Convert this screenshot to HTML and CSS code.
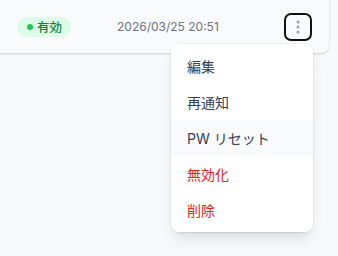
FILE: index.html
```html
<!DOCTYPE html>
<html lang="ja">
<head>
<meta charset="utf-8">
<link rel="stylesheet" href="styles.css">
</head>
<body>
<div class="page">
  <div class="card">
    <div class="row">
      <div class="cell-status">
        <span class="badge"><span class="dot"></span>有効</span>
      </div>
      <div class="cell-date">2026/03/25 20:51</div>
      <div class="cell-actions">
        <button class="kebab" aria-label="メニュー">
          <svg width="4" height="14" viewBox="0 0 4 14"><circle cx="2" cy="2" r="1.5"/><circle cx="2" cy="7" r="1.5"/><circle cx="2" cy="12" r="1.5"/></svg>
        </button>
        <div class="menu">
          <div class="item">編集</div>
          <div class="item">再通知</div>
          <div class="item hover">PW リセット</div>
          <div class="item danger">無効化</div>
          <div class="item danger">削除</div>
        </div>
      </div>
    </div>
  </div>
</div>
</body>
</html>
```
FILE: styles.css
```css
* { box-sizing: border-box; }
html, body { margin: 0; padding: 0; }
body {
  background: #f8f9fb;
  font-family: Inter, "Noto Sans CJK JP", sans-serif;
  width: 338px;
  height: 256px;
  overflow: hidden;
}
.page { padding-right: 9px; }
.card {
  margin-top: -20px;
  margin-left: -10px;
  background: #f9fafb;
  border-radius: 0 0 8px 8px;
  box-shadow: 0 1px 3px rgba(0,0,0,0.12), 0 1px 2px rgba(0,0,0,0.06);
}
.row {
  display: flex;
  align-items: center;
  height: 73px;
  padding-top: 20px;
}
.cell-status { width: 127px; padding-left: 27px; display: flex; }
.badge {
  display: inline-flex;
  align-items: center;
  gap: 4px;
  height: 20px;
  padding: 0 9px 0 10px;
  border-radius: 10px;
  background: #dcfce7;
  color: #15803d;
  font-size: 12.5px;
  font-weight: 500;
}
.dot { width: 6px; height: 6px; border-radius: 50%; background: #22c55e; }
.cell-date { flex: 1; font-size: 12px; color: #6b7280; }
.cell-actions { position: relative; width: 45px; display: flex; }
.kebab {
  width: 28px; height: 28px;
  border: 2px solid #111;
  border-radius: 7px;
  background: transparent;
  padding: 0;
  display: flex; align-items: center; justify-content: center;
  fill: #9ca3af;
}
.menu {
  position: absolute;
  top: 31px;
  right: 16px;
  width: 142px;
  background: #fff;
  border-radius: 8px;
  padding: 4px 0;
  box-shadow: 0 10px 15px -3px rgba(0,0,0,0.1), 0 4px 6px -4px rgba(0,0,0,0.1), 0 0 0 1px rgba(0,0,0,0.04);
  z-index: 2;
}
.item {
  height: 36px;
  display: flex; align-items: center;
  padding-left: 16px;
  font-size: 14px;
  color: #374151;
}
.item.hover { background: #f9fafb; }
.item.danger { color: #dc2626; }
```
